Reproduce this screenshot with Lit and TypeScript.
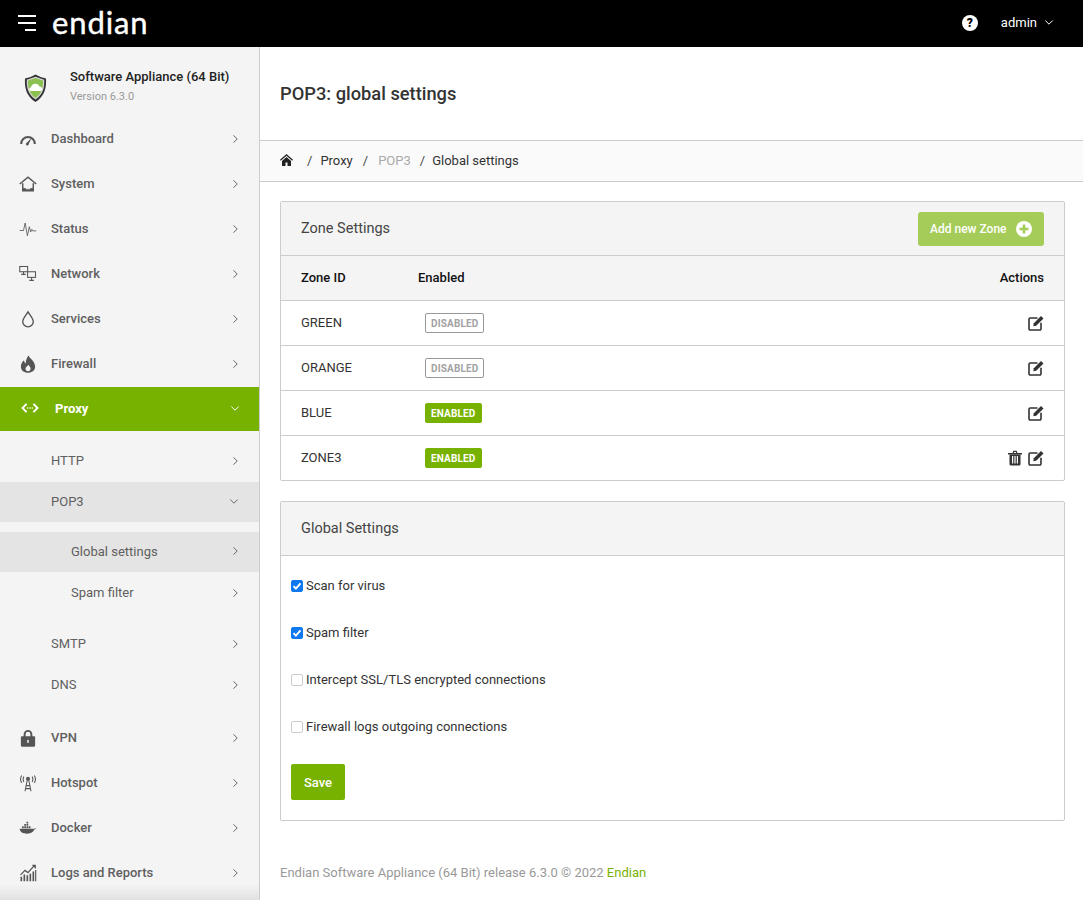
import { LitElement, html, css, svg } from "lit";
import { customElement } from "lit/decorators.js";

const ic = (body: unknown, vb = "0 0 24 24") =>
  html`<svg class="ico" viewBox="${vb}" width="18" height="18" aria-hidden="true">${body}</svg>`;

const icons: Record<string, unknown> = {
  dash: ic(svg`<path d="M1.500 18.500a10.500 10.500 0 0 1 21 0h-2.800a7.700 7.700 0 0 0-15.400 0z" fill="#555"/><path d="M10.300 17l6.400-6.200-3.700 7.800a1.900 1.900 0 1 1-2.700-1.600z" fill="#555"/>`),
  home: ic(svg`<path d="M1 12L12 3l11 9" fill="none" stroke="#555" stroke-width="1.900"/><path d="M5 11v10h14V11" fill="none" stroke="#555" stroke-width="1.900"/><path d="M5 17.500h14v3.500H5z" fill="#555"/><path d="M9 17.500h6V19H9z" fill="#f4f4f4"/>`),
  status: ic(svg`<path d="M1 14h5l2.200-10 3 17 2.600-12 1.700 7 1.600-3.500 1.200 2H23" fill="none" stroke="#555" stroke-width="1.100"/>`),
  net: ic(svg`<g fill="none" stroke="#555" stroke-width="1.400"><rect x="1" y="2" width="10.500" height="7"/><path d="M6 9v3M3 12.500h6"/><rect x="11.500" y="9" width="10.500" height="7.500" fill="#f4f4f4"/><path d="M16.800 16.500v3.500M13.800 20.500h6"/></g>`),
  drop: ic(svg`<path d="M12 2.500c3 5 7 8.500 7 13a7 7 0 0 1-14 0c0-4.500 4-8 7-13z" fill="none" stroke="#555" stroke-width="1.800"/>`),
  fire: ic(svg`<path d="M12.800 .5c1 4 8.700 7 8.700 15 0 5-4.300 8-9.500 8s-9.500-3-9.500-8c0-3.800 1.700-6.300 4.200-8.500.2 2 .8 3.500 2.200 4.200.2-4 1.300-7.700 3.900-10.700zM12 21.500c2 0 3.500-1.300 3.500-3.300 0-2-1.800-3.200-3-5.200-1.300 2-3.800 3.200-3.800 5.200s1.300 3.300 3.300 3.300z" fill="#555" fill-rule="evenodd"/>`),
  proxy: ic(svg`<path d="M7.500 6.500L2 12l5.500 5.500M16.500 6.500L22 12l-5.500 5.500" fill="none" stroke="#fff" stroke-width="2.600"/><circle cx="9" cy="12" r="1.100" fill="#fff"/><circle cx="12" cy="12" r="1.100" fill="#fff"/><circle cx="15" cy="12" r="1.100" fill="#fff"/>`),
  lock: ic(svg`<path d="M7.500 11V7a4.500 4.500 0 0 1 9 0v4" fill="none" stroke="#555" stroke-width="2.600"/><rect x="2.500" y="9.500" width="19" height="14" rx="1.500" fill="#555"/><rect x="11" y="14.500" width="2" height="4" fill="#f4f4f4"/>`),
  hotspot: ic(svg`<g fill="none" stroke="#555" stroke-width="1.400"><path d="M3.500 2a10 10 0 0 0 0 10M6.500 3.500a7 7 0 0 0 0 7M20.500 2a10 10 0 0 1 0 10M17.500 3.500a7 7 0 0 1 0 7"/><path d="M10.800 9L8 23M13.200 9L16 23M9.500 15.500h5M8.700 19.500h6.600"/></g><circle cx="12" cy="6.500" r="2.700" fill="#555"/>`),
  docker: ic(svg`<path d="M1 13h19c1 0 1.800-.8 3-1-.3 1-1.500 1.600-2.500 2-1.500 3.500-4.500 5.500-9.500 5.500-6 0-9.700-2-10-6.500z" fill="#555"/><path d="M4 9.500h2.300v2.800H4zM7 9.500h2.300v2.800H7zM10 9.500h2.300v2.800H10zM13 9.500h2.300v2.800H13zM7 6.500h2.300v2.500H7zM10 6.500h2.300v2.500H10zM10 3.500h2.300V6H10z" fill="#555"/>`),
  logs: ic(svg`<path d="M2 14.500l6-6 4 3 8-9" fill="none" stroke="#555" stroke-width="1.700"/><path d="M17 1h5.500v5.500z" fill="#555"/><path d="M2 17h2.200v6H2zM6 14h2.200v9H6zM10 15h2.200v8H10zM14 13h2.200v10H14zM18 10h2.200v13H18zM21.500 8h1.500v15h-1.500z" fill="#555"/>`),
};

const chev = (d: "r" | "d", color = "#666") =>
  d === "r"
    ? html`<svg class="chev" width="7" height="10" viewBox="0 0 7 10"><path d="M1.500 1.300l3.700 3.700-3.700 3.700" fill="none" stroke="${color}" stroke-width="1"/></svg>`
    : html`<svg class="chev" width="10" height="7" viewBox="0 0 10 7"><path d="M1.300 1.500l3.700 3.700 3.700-3.700" fill="none" stroke="${color}" stroke-width="1"/></svg>`;

const editIcon = html`<svg width="16" height="16" viewBox="0 0 16 16"><path d="M9.500 3H2.200A1.200 1.200 0 0 0 1 4.200v9.600A1.200 1.200 0 0 0 2.200 15h9.600a1.200 1.200 0 0 0 1.200-1.200V7.800" fill="none" stroke="#333" stroke-width="1.600"/><path d="M5.800 8.300L13 1l2.500 2.500-7.300 7.300-2.900.5z" fill="#333"/></svg>`;
const trashIcon = html`<svg width="14" height="16" viewBox="0 0 14 16"><path d="M0 3h14v1.400H0zM4.500 3l.8-2.200h3.400L9.500 3H8.200l-.3-.9H6.100l-.3.900z" fill="#333"/><path d="M1.500 4.400h11V14a1.600 1.600 0 0 1-1.600 1.600H3.100A1.600 1.600 0 0 1 1.500 14z" fill="#333"/><path d="M4 6h1.200v7.600H4zM6.400 6h1.200v7.600H6.400zM8.800 6H10v7.600H8.800z" fill="#fff"/></svg>`;

const top = [
  ["Dashboard", "dash"], ["System", "home"], ["Status", "status"], ["Network", "net"], ["Services", "drop"], ["Firewall", "fire"],
];
const bottom = [["VPN", "lock"], ["Hotspot", "hotspot"], ["Docker", "docker"], ["Logs and Reports", "logs"]];

@customElement("app-root")
export class AppRoot extends LitElement {
  static styles = css`
    :host { display: block; font-family: Roboto, "Liberation Sans", sans-serif; font-size: 13px; color: #333; height: 900px; overflow: hidden; background: #fff; }
    * { box-sizing: border-box; }
    .topbar { height: 47px; background: #000; color: #fff; display: flex; align-items: center; padding: 0 29px 2px 18px; }
    .burger { display: flex; flex-direction: column; gap: 5px; align-items: flex-end; width: 18px; margin-right: 16px; }
    .burger i { display: block; height: 2px; background: #fff; width: 18px; }
    .burger i:last-child { width: 11px; }
    .logo { font-family: Lato, sans-serif; font-size: 31px; font-weight: 400; letter-spacing: .9px; line-height: 1; color: #fff; -webkit-text-stroke: .4px #fff; }
    .spacer { flex: 1; }
    .help { width: 16px; height: 16px; border-radius: 50%; background: #fff; color: #000; font-size: 12px; font-weight: 900; display: flex; align-items: center; justify-content: center; margin-right: 23px; }
    .admin { font-size: 13px; font-weight: 400; display: flex; align-items: center; gap: 7px; }
    .shell { display: grid; grid-template-columns: 260px 1fr; height: 853px; }
    .side { background: #f4f4f4; border-right: 1px solid #ccc; position: relative; overflow: hidden; }
    .side::after { content: ""; position: absolute; left: 0; right: 0; bottom: 0; height: 16px; background: linear-gradient(rgba(0,0,0,0), rgba(0,0,0,.08)); }
    .brand { height: 69px; display: flex; padding: 14px 0 0 24px; gap: 23px; }
    .brand svg { margin-top: 13px; flex: none; }
    .brand b { display: block; font-weight: 500; font-size: 13px; color: #222; line-height: 16px; margin-top: 8px; }
    .brand small { display: block; font-size: 11px; color: #999; line-height: 16px; margin-top: 4px; }
    .item { height: 45px; display: flex; align-items: center; padding: 0 20px 0 19px; color: #5f5f5f; font-weight: 500; }
    .ico { flex: none; margin-right: 14px; width: 18px; height: 18px; }
    .item span, .sub span { flex: 1; }
    .item.active { background: #78b200; color: #fff; font-weight: 700; height: 44px; margin-top: 1px; padding-bottom: 2px; }
    .item.active .ico { margin-left: 2px; margin-right: 16px; }
    .item.active .chev { margin-right: -1px; }
    .subs { padding: 9px 0 10px; }
    .sub { height: 41px; display: flex; align-items: center; padding: 0 20px 0 51px; color: #5f5f5f; }
    .sub.open, .sub.sel { background: #e4e4e4; height: 40px; margin-top: 1px; padding-bottom: 2px; }
    .subs2 { padding: 9px 0 10px; }
    .sub.l2 { padding-left: 71px; }
    .main { display: flex; flex-direction: column; min-width: 0; }
    .title { height: 94px; border-bottom: 1px solid #ccc; padding: 35px 20px 0 20px; font-size: 18.300px; font-weight: 500; color: #333; line-height: 24px; }
    .crumbs { height: 41px; border-bottom: 1px solid #ccc; background: #fafafa; display: flex; align-items: center; padding: 0 20px 2px; color: #333; }
    .crumbs svg { margin-right: 14px; }
    .crumbs .s { margin-right: 8px; color: #444; }
    .crumbs .t { margin-right: 10px; }
    .crumbs .m { color: #aaa; margin: 0 9px 0 2px; }
    .crumbs .s.last { margin-right: 7px; }
    .content { padding: 19px 18px 0 20px; flex: 1; display: flex; flex-direction: column; gap: 20px; }
    .card { border: 1px solid #ccc; border-radius: 2px; background: #fff; }
    .card-h { height: 54px; background: #f4f4f4; border-bottom: 1px solid #ccc; display: flex; align-items: center; justify-content: space-between; padding: 0 20px; font-size: 14.500px; color: #444; }
    .add { height: 34px; width: 126px; border-radius: 3px; background: #a5cc58; color: #fff; border: 0; font: inherit; font-size: 12px; display: flex; align-items: center; justify-content: space-between; padding: 0 12px; font-weight: 500; }
    .row { height: 45px; display: grid; grid-template-columns: 124px 1fr auto; align-items: center; padding: 0 20px; border-bottom: 1px solid #ccc; color: #333; }
    .row:last-child { border-bottom: 0; height: 44px; }
    .row > .name { padding-bottom: 2px; }
    .row.head { background: #f4f4f4; color: #111; font-weight: 500; font-size: 13px; }
    .row.head span { padding-bottom: 2px; }
    .row.head span:nth-child(2) { margin-left: -7px; }
    .badge { display: inline-block; font-size: 10px; font-weight: 700; line-height: 19px; height: 20px; border-radius: 2px; padding: 0 5px; letter-spacing: .15px; }
    .badge.off { border: 1px solid #999; color: #a3a3a3; width: 59px; }
    .badge.on { background: #78b200; color: #fff; border: 1px solid #78b200; width: 57px; }
    .acts { display: flex; gap: 6px; align-items: center; padding-bottom: 1px; }
    .acts svg { display: block; }
    .form { padding: 6px 10px 20px; }
    .check { height: 47px; display: flex; align-items: center; gap: 3px; color: #333; }
    .box { width: 12px; height: 12px; border-radius: 2px; border: 1px solid #ccc; background: #fff; display: flex; align-items: center; justify-content: center; }
    .box.on { background: #0f78f0; border-color: #0f78f0; }
    .save { display: block; margin-top: 14px; width: 54px; height: 36px; border: 0; border-radius: 2px; background: #78b200; color: #fff; font: inherit; font-size: 13px; font-weight: 500; }
    footer { margin-top: auto; padding-bottom: 20px; color: #999; font-size: 13px; }
    footer a { color: #78b200; text-decoration: none; }
  `;

  private item = (n: string[]) => html`<div class="item">${icons[n[1]]}<span>${n[0]}</span>${chev("r")}</div>`;
  private zone(name: string, on: boolean, del = false) {
    return html`<div class="row"><span class="name">${name}</span><span><span class="badge ${on ? "on" : "off"}">${on ? "ENABLED" : "DISABLED"}</span></span>
      <span class="acts">${del ? trashIcon : ""}${editIcon}</span></div>`;
  }
  private check(label: string, on: boolean) {
    return html`<label class="check"><span class="box ${on ? "on" : ""}">${on ? html`<svg width="10" height="10" viewBox="0 0 10 10"><path d="M1.500 5.200l2.400 2.400 4.600-5.200" fill="none" stroke="#fff" stroke-width="1.900"/></svg>` : ""}</span>${label}</label>`;
  }

  render() {
    return html`
      <header class="topbar">
        <div class="burger"><i></i><i></i><i></i></div>
        <div class="logo">endian</div>
        <div class="spacer"></div>
        <div class="help">?</div>
        <div class="admin">admin ${chev("d", "#fff")}</div>
      </header>
      <div class="shell">
        <aside class="side">
          <div class="brand">
            <svg width="23" height="29" viewBox="0 0 23 29"><path d="M11.500 .5l5 2.500 5.500 1.500c.5 9-1 17.500-10.500 23.500C2 22 .5 13.500 1 4.500L6.500 3z" fill="#333"/><path d="M11.500 2.700l8.700 3c.3 7.500-1 14.500-8.700 19.800C3.800 20.200 2.500 13.200 2.800 5.700z" fill="#d8d8d8"/><path d="M11.500 4l7.500 2.600c.2 6.800-1 13-7.500 17.400C5 19.600 3.800 13.400 4 6.600z" fill="#8cc152"/><path d="M5.800 17a2.300 2.300 0 0 1 1.200-3.800 4.500 4.500 0 0 1 8.600-.4A2.300 2.300 0 0 1 17.200 17z" fill="#fff"/></svg>
            <div><b>Software Appliance (64 Bit)</b><small>Version 6.3.0</small></div>
          </div>
          ${top.map(this.item)}
          <div class="item active">${icons.proxy}<span>Proxy</span>${chev("d", "#fff")}</div>
          <div class="subs">
            <div class="sub"><span>HTTP</span>${chev("r")}</div>
            <div class="sub open"><span>POP3</span>${chev("d")}</div>
            <div class="subs2">
              <div class="sub l2 sel"><span>Global settings</span>${chev("r")}</div>
              <div class="sub l2"><span>Spam filter</span>${chev("r")}</div>
            </div>
            <div class="sub"><span>SMTP</span>${chev("r")}</div>
            <div class="sub"><span>DNS</span>${chev("r")}</div>
          </div>
          ${bottom.map(this.item)}
        </aside>
        <main class="main">
          <div class="title">POP3: global settings</div>
          <nav class="crumbs">
            <svg width="13" height="12" viewBox="0 0 13 12"><path d="M6.500 0L0 5.800l.8.900L6.500 1.700l5.700 5 .8-.9z" fill="#222"/><path d="M6.500 3L2 7v5h3.500V8.500h2V12H11V7z" fill="#222"/></svg>
            <span class="s">/</span><span class="t">Proxy</span><span class="s">/</span><span class="m">POP3</span><span class="s last">/</span><span>Global settings</span>
          </nav>
          <div class="content">
            <section class="card">
              <div class="card-h"><span>Zone Settings</span>
                <button class="add">Add new Zone <svg width="16" height="16" viewBox="0 0 16 16"><circle cx="8" cy="8" r="8" fill="#fff"/><path d="M3.500 6.700h9v2.600h-9zM6.700 3.500h2.600v9H6.700z" fill="#a5cc58"/></svg></button>
              </div>
              <div class="row head"><span>Zone ID</span><span>Enabled</span><span>Actions</span></div>
              ${this.zone("GREEN", false)}
              ${this.zone("ORANGE", false)}
              ${this.zone("BLUE", true)}
              ${this.zone("ZONE3", true, true)}
            </section>
            <section class="card">
              <div class="card-h"><span>Global Settings</span></div>
              <div class="form">
                ${this.check("Scan for virus", true)}
                ${this.check("Spam filter", true)}
                ${this.check("Intercept SSL/TLS encrypted connections", false)}
                ${this.check("Firewall logs outgoing connections", false)}
                <button class="save">Save</button>
              </div>
            </section>
            <footer>Endian Software Appliance (64 Bit) release 6.3.0 © 2022 <a>Endian</a></footer>
          </div>
        </main>
      </div>
    `;
  }
}
